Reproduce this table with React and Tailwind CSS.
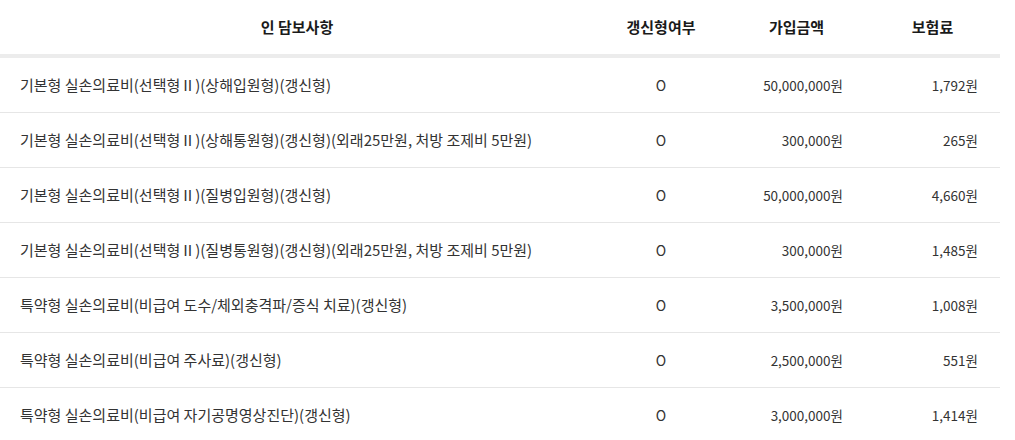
const rows = [
  { name: '기본형 실손의료비(선택형Ⅱ)(상해입원형)(갱신형)', renew: 'O', amount: '50,000,000원', premium: '1,792원' },
  { name: '기본형 실손의료비(선택형Ⅱ)(상해통원형)(갱신형)(외래25만원, 처방 조제비 5만원)', renew: 'O', amount: '300,000원', premium: '265원' },
  { name: '기본형 실손의료비(선택형Ⅱ)(질병입원형)(갱신형)', renew: 'O', amount: '50,000,000원', premium: '4,660원' },
  { name: '기본형 실손의료비(선택형Ⅱ)(질병통원형)(갱신형)(외래25만원, 처방 조제비 5만원)', renew: 'O', amount: '300,000원', premium: '1,485원' },
  { name: '특약형 실손의료비(비급여 도수/체외충격파/증식 치료)(갱신형)', renew: 'O', amount: '3,500,000원', premium: '1,008원' },
  { name: '특약형 실손의료비(비급여 주사료)(갱신형)', renew: 'O', amount: '2,500,000원', premium: '551원' },
  { name: '특약형 실손의료비(비급여 자기공명영상진단)(갱신형)', renew: 'O', amount: '3,000,000원', premium: '1,414원' },
];

const cols = 'grid grid-cols-[594px_134px_137px_135px] items-center';

export default function App() {
  return (
    <div className="w-[1015px] h-[440px] overflow-hidden bg-white font-['Noto_Sans_CJK_KR','Noto_Sans',sans-serif]">
      <div className="w-[1000px]">
        {/* header */}
        <div className={`${cols} h-[58px] border-b-4 border-[#ececec] text-[15px] font-bold text-[#1a1a1a]`}>
          <div className="text-center">인 담보사항</div>
          <div className="text-center">갱신형여부</div>
          <div className="text-center">가입금액</div>
          <div className="text-center">보험료</div>
        </div>

        {/* rows */}
        {rows.map((r, i) => (
          <div key={i} className={`${cols} h-[55px] border-b border-[#e6e6e6] text-[#333]`}>
            <div className="pl-5 text-[15px] whitespace-nowrap">{r.name}</div>
            <div className="text-center text-[14px]">{r.renew}</div>
            <div className="pr-[22px] text-right text-[13.5px]">{r.amount}</div>
            <div className="pr-[22px] text-right text-[13.5px]">{r.premium}</div>
          </div>
        ))}
      </div>
    </div>
  );
}
